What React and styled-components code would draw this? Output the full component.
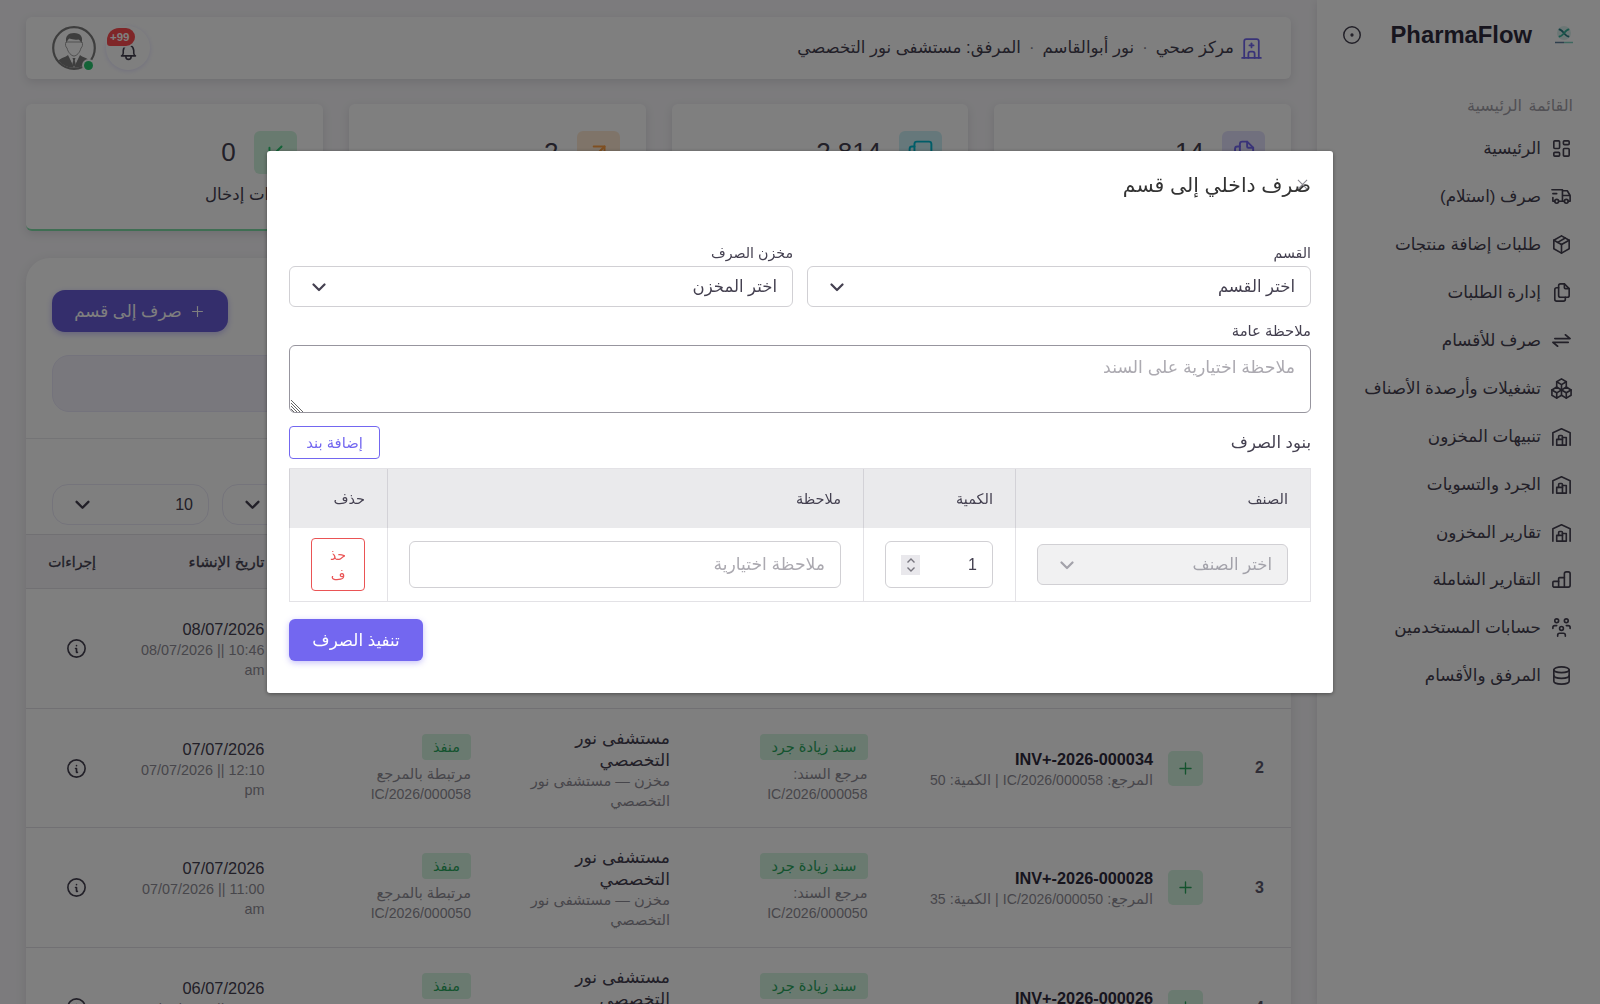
import React from "react";
import styled, { createGlobalStyle } from "styled-components";
import {
  TbLayoutDashboard,
  TbTruckDelivery,
  TbPackage,
  TbPackages,
  TbFiles,
  TbBuildingWarehouse,
  TbUsersGroup,
  TbDatabase,
  TbBuildingHospital,
  TbCircleDot,
  TbInfoCircle,
  TbBell,
  TbBoxMultiple,
  TbArrowUpRight,
  TbArrowDownLeft,
  TbPlus,
} from "react-icons/tb";

const SwapIcon = () => (
  <svg width="22" height="22" viewBox="0 0 24 24" fill="none" stroke="currentColor" strokeWidth="1.7" strokeLinecap="round" strokeLinejoin="round">
    <path d="M5 10h16l-5 -4" />
    <path d="M19 14h-16l5 4" />
  </svg>
);

const BarsIcon = () => (
  <svg width="22" height="22" viewBox="0 0 24 24" fill="none" stroke="currentColor" strokeWidth="1.7" strokeLinecap="round" strokeLinejoin="round">
    <path d="M9 20v-9a1 1 0 0 1 1 -1h5" />
    <path d="M15 20v-14a2 2 0 0 1 2 -2h2a2 2 0 0 1 2 2v12a2 2 0 0 1 -2 2h-15a2 2 0 0 1 -1 -1v-4a1 1 0 0 1 1 -1h5" />
  </svg>
);

const Chevron = ({ size = 14 }) => (
  <svg width={size} height={size} viewBox="0 0 14 14" fill="none" stroke="currentColor" strokeWidth="2.2" strokeLinecap="round" strokeLinejoin="round">
    <path d="M1.5 4.5l5.5 5.5l5.5 -5.5" />
  </svg>
);

const BrandLogo = () => (
  <svg width="20" height="20" viewBox="0 0 20 20" fill="none">
    <circle cx="10" cy="8" r="7" fill="#d9efec" />
    <path d="M5.5 4.5c3 0 5.500 7 9 7" stroke="#2b7f86" strokeWidth="1.8" strokeLinecap="round" />
    <path d="M14.5 4.5c-3 0 -5.500 7 -9 7" stroke="#35b39a" strokeWidth="1.8" strokeLinecap="round" />
    <path d="M1 17.500h9" stroke="#5c7f9b" strokeWidth="1.500" />
    <path d="M10 17.500h9" stroke="#7fd0c0" strokeWidth="1.500" />
  </svg>
);

const AvatarIcon = () => (
  <svg width="44" height="44" viewBox="0 0 44 44">
    <circle cx="22" cy="22" r="20.8" fill="#fff" stroke="#7d7d7d" strokeWidth="2.2" />
    <path d="M6.500 34.500c3 -3 7 -3 9.500 -5.500l6 12l6 -12c2.500 2.500 6.500 2.500 9.500 5.500a20 20 0 0 1 -31 0z" fill="#7d7d7d" />
    <path d="M17.500 30l4.500 12l4.500 -12z" fill="#fff" />
    <path d="M20.5 32h3l-.7 2.5l1 4l-1.8 2.5l-1.8 -2.5l1 -4z" fill="#7d7d7d" />
    <path d="M14 16c-1 2 -.5 5 1 6c1 4.500 4.500 8 7 8s6 -3.500 7 -8c1.500 -1 2 -4 1 -6z" fill="#fff" stroke="#8a8a8a" strokeWidth="0.800" />
    <path d="M14.500 17c-2 -7 2 -10 7.500 -10c6.500 0 9.500 4 7.500 10c-1 -2 -2 -3 -3 -3.500c-4 .5 -6 0 -9 -1c-1.500 1 -2.500 2.500 -3 4.500z" fill="#7d7d7d" />
  </svg>
);

const NAV = [
  { label: "الرئيسية", icon: <TbLayoutDashboard /> },
  { label: "صرف (استلام)", icon: <TbTruckDelivery /> },
  { label: "طلبات إضافة منتجات", icon: <TbPackage /> },
  { label: "إدارة الطلبات", icon: <TbFiles /> },
  { label: "صرف للأقسام", icon: <SwapIcon /> },
  { label: "تشغيلات وأرصدة الأصناف", icon: <TbPackages /> },
  { label: "تنبيهات المخزون", icon: <TbBuildingWarehouse /> },
  { label: "الجرد والتسويات", icon: <TbBuildingWarehouse /> },
  { label: "تقارير المخزون", icon: <TbBuildingWarehouse /> },
  { label: "التقارير الشاملة", icon: <BarsIcon /> },
  { label: "حسابات المستخدمين", icon: <TbUsersGroup /> },
  { label: "المرفق والأقسام", icon: <TbDatabase /> },
];

const STATS = [
  { value: "14", icon: <TbFiles />, color: "#7367f0", tint: "#e3e0fc" },
  { value: "2,814", icon: <TbBoxMultiple />, color: "#00bad1", tint: "#ccf1f6" },
  { value: "2", icon: <TbArrowUpRight />, color: "#ff9f43", tint: "#ffe9d2" },
  { value: "0", icon: <TbArrowDownLeft />, color: "#28c76f", tint: "#d0f4de", label: "سندات إدخال", line: "#7edda7" },
];

const ROWS = [
  { id: "1", date: "08/07/2026", time: "08/07/2026 || 10:46", half: "am" },
  { id: "2", doc: "INV+-2026-000034", ref: "IC/2026/000058", qty: "50", date: "07/07/2026", time: "07/07/2026 || 12:10", half: "pm" },
  { id: "3", doc: "INV+-2026-000028", ref: "IC/2026/000050", qty: "35", date: "07/07/2026", time: "07/07/2026 || 11:00", half: "am" },
  { id: "4", doc: "INV+-2026-000026", ref: "IC/2026/000048", qty: "20", date: "06/07/2026", time: "06/07/2026 || 10:12", half: "am" },
];

function Sidebar() {
  return (
    <Aside>
      <Brand>
        <BrandLogo />
        <BrandName>PharmaFlow</BrandName>
        <TbCircleDot size={22} strokeWidth={1.6} />
      </Brand>
      <NavTitle>القائمة الرئيسية</NavTitle>
      {NAV.map((item) => (
        <NavItem key={item.label}>
          {item.icon}
          <span>{item.label}</span>
        </NavItem>
      ))}
    </Aside>
  );
}

function TopBar() {
  return (
    <Bar>
      <Facility>
        <TbBuildingHospital size={25} color="#7367f0" strokeWidth={1.7} />
        <span>مركز صحي</span>
        <Dot>·</Dot>
        <span>نور أبوالقاسم</span>
        <Dot>·</Dot>
        <span>المرفق: مستشفى نور التخصصي</span>
      </Facility>
      <BarTools>
        <BellButton>
          <TbBell size={21} strokeWidth={1.8} />
          <Count dir="ltr">+99</Count>
        </BellButton>
        <Avatar>
          <AvatarIcon />
          <Online />
        </Avatar>
      </BarTools>
    </Bar>
  );
}

function Ledger() {
  return (
    <LedgerCard>
      <LedgerHead>
        <DispatchButton>
          <TbPlus size={17} strokeWidth={1.6} />
          صرف إلى قسم
        </DispatchButton>
        <FilterStrip />
      </LedgerHead>
      <LedgerTools>
        <PillSelect>
          <span />
          <Chevron size={15} />
        </PillSelect>
        <PillSelect>
          <span>10</span>
          <Chevron size={15} />
        </PillSelect>
      </LedgerTools>
      <HeadRow>
        <span>تاريخ الإنشاء</span>
        <span>إجراءات</span>
      </HeadRow>
      {ROWS.map((row) => (
        <LedgerRow key={row.id} row={row} />
      ))}
    </LedgerCard>
  );
}

function LedgerRow({ row }) {
  return (
    <Row>
      <RowId>{row.id}</RowId>
      {row.doc && (
        <>
          <PlusBox>
            <TbPlus size={19} strokeWidth={1.7} />
          </PlusBox>
          <Cell>
            <DocName dir="ltr">{row.doc}</DocName>
            <Muted>
              المرجع: <Latin>{row.ref}</Latin> <Latin>|</Latin> الكمية: <Latin>{row.qty}</Latin>
            </Muted>
          </Cell>
          <Cell>
            <Badge>سند زيادة جرد</Badge>
            <Muted>مرجع السند:</Muted>
            <Muted>
              <Latin>{row.ref}</Latin>
            </Muted>
          </Cell>
          <Cell>
            <Place>مستشفى نور</Place>
            <Place>التخصصي</Place>
            <Muted>مخزن — مستشفى نور</Muted>
            <Muted>التخصصي</Muted>
          </Cell>
          <Cell>
            <Badge>منفذ</Badge>
            <Muted>مرتبطة بالمرجع</Muted>
            <Muted>
              <Latin>{row.ref}</Latin>
            </Muted>
          </Cell>
        </>
      )}
      <DateCell>
        <DateText>{row.date}</DateText>
        <TimeText dir="ltr">{row.time}</TimeText>
        <TimeText dir="ltr">{row.half}</TimeText>
      </DateCell>
      <Action>
        <TbInfoCircle size={23} strokeWidth={1.7} />
      </Action>
    </Row>
  );
}

function DispatchModal() {
  return (
    <Modal>
      <ModalTitle>صرف داخلي إلى قسم</ModalTitle>
      <CloseMark viewBox="0 0 12 12">
        <path d="M1 1l10 10M11 1l-10 10" stroke="#8a8890" strokeWidth="1.1" />
      </CloseMark>
      <FieldPair>
        <div>
          <Label>القسم</Label>
          <Select>
            <span>اختر القسم</span>
            <Chevron />
          </Select>
        </div>
        <div>
          <Label>مخزن الصرف</Label>
          <Select>
            <span>اختر المخزن</span>
            <Chevron />
          </Select>
        </div>
      </FieldPair>
      <NoteLabel>ملاحظة عامة</NoteLabel>
      <NoteArea>
        ملاحظة اختيارية على السند
        <Grip viewBox="0 0 12 12">
          <path d="M0 0l12 12M0 3l9 9M0 6l6 6M0 9l3 3" stroke="#666" strokeWidth="1" />
        </Grip>
      </NoteArea>
      <ItemsHead>
        <span>بنود الصرف</span>
        <AddButton>إضافة بند</AddButton>
      </ItemsHead>
      <ItemsTable>
        <ItemTh>الصنف</ItemTh>
        <ItemTh>الكمية</ItemTh>
        <ItemTh>ملاحظة</ItemTh>
        <ItemTh>حذف</ItemTh>
        <ItemTd>
          <Select $disabled>
            <span>اختر الصنف</span>
            <Chevron />
          </Select>
        </ItemTd>
        <ItemTd>
          <Input>
            <Quantity>1</Quantity>
            <Spinner>
              <svg width="10" height="16" viewBox="0 0 10 16" fill="none" stroke="#77757e" strokeWidth="1.4">
                <path d="M1.5 5.5l3.5 -3.5l3.5 3.5M1.5 10.5l3.5 3.5l3.5 -3.5" />
              </svg>
            </Spinner>
          </Input>
        </ItemTd>
        <ItemTd>
          <Input>
            <Hint>ملاحظة اختيارية</Hint>
          </Input>
        </ItemTd>
        <ItemTd>
          <DeleteButton>
            <span>حذ</span>
            <span>ف</span>
          </DeleteButton>
        </ItemTd>
      </ItemsTable>
      <SubmitButton>تنفيذ الصرف</SubmitButton>
    </Modal>
  );
}

function App() {
  return (
    <Page dir="rtl">
      <GlobalStyle />
      <Sidebar />
      <Main>
        <TopBar />
        <Stats>
          {STATS.map((stat) => (
            <StatCard key={stat.value} $line={stat.line}>
              <StatTop>
                <StatIcon $color={stat.color} $tint={stat.tint}>
                  {stat.icon}
                </StatIcon>
                <StatValue>{stat.value}</StatValue>
              </StatTop>
              <StatLabel>{stat.label}</StatLabel>
            </StatCard>
          ))}
        </Stats>
        <Ledger />
      </Main>
      <Backdrop>
        <DispatchModal />
      </Backdrop>
    </Page>
  );
}

const GlobalStyle = createGlobalStyle`
  * {
    box-sizing: border-box;
  }
  body {
    margin: 0;
    overflow: hidden;
    font-family: "Liberation Sans", "DejaVu Sans", sans-serif;
    font-size: 16.5px;
    color: #444050;
  }
`;

const Page = styled.div`
  display: flex;
  height: 1004px;
  overflow: hidden;
  background: #f8f7fa;
`;

const Aside = styled.aside`
  width: 283px;
  flex: none;
  background: #fff;
  box-shadow: 0 2px 8px rgba(47, 43, 61, 0.12);
`;

const Brand = styled.div`
  display: flex;
  align-items: center;
  height: 70px;
  padding: 0 26px 0 24px;

  > :last-child {
    margin-inline-start: auto;
  }
`;

const BrandName = styled.span`
  margin-inline-start: 22px;
  font-size: 23.8px;
  font-weight: 700;
  color: #2f2b3d;
`;

const NavTitle = styled.div`
  display: flex;
  align-items: center;
  height: 31px;
  margin: 20px 27px 4px;
  font-size: 16px;
  word-spacing: 2px;
  color: #a3a1a9;
`;

const NavItem = styled.div`
  display: flex;
  align-items: center;
  gap: 9px;
  height: 47.9px;
  padding-inline-start: 27px;
  font-size: 16.8px;
  white-space: nowrap;

  svg {
    width: 23px;
    height: 23px;
    stroke-width: 1.7;
  }
`;

const Main = styled.main`
  display: flex;
  flex-direction: column;
  flex: 1;
  padding: 17px 26px 0;
`;

const Bar = styled.header`
  display: flex;
  align-items: center;
  justify-content: space-between;
  flex: none;
  height: 62px;
  padding: 0 27px 0 26px;
  background: #fff;
  border-radius: 6px;
  box-shadow: 0 3px 10px rgba(47, 43, 61, 0.13);
`;

const Facility = styled.div`
  display: flex;
  align-items: center;
  gap: 8px;
  font-size: 16.6px;

  svg {
    margin-inline-end: -3px;
  }
`;

const Dot = styled.span`
  color: #8a8890;
`;

const BarTools = styled.div`
  display: flex;
  align-items: center;
  gap: 10px;
`;

const BellButton = styled.div`
  position: relative;
  display: flex;
  align-items: center;
  justify-content: center;
  width: 44px;
  height: 44px;
  padding-top: 6px;
  border-radius: 50%;
  box-shadow: 0 1px 5px rgba(115, 103, 240, 0.2);
`;

const Count = styled.span`
  position: absolute;
  top: 2px;
  left: 1px;
  padding: 0 5px 0 3px;
  height: 18px;
  line-height: 18px;
  border-radius: 12px 9px 9px 3px;
  background: #ff4c51;
  box-shadow: 0 0 0 1.5px #fff;
  color: #fff;
  font-size: 11.5px;
  font-weight: 700;
`;

const Avatar = styled.div`
  position: relative;
  width: 44px;
  height: 44px;
`;

const Online = styled.span`
  position: absolute;
  right: 3px;
  bottom: 0;
  width: 9px;
  height: 9px;
  border-radius: 50%;
  background: #28c76f;
  box-shadow: 0 0 0 2px #fff;
`;

const Stats = styled.section`
  display: grid;
  grid-template-columns: repeat(4, 1fr);
  gap: 26px;
  flex: none;
  margin-top: 25px;
`;

const StatCard = styled.div`
  height: 127px;
  padding: 27px 26px 0;
  background: #fff;
  border-radius: 6px;
  border-bottom: 2px solid ${(props) => props.$line || "transparent"};
  box-shadow: 0 3px 10px rgba(47, 43, 61, 0.13);
`;

const StatTop = styled.div`
  display: flex;
  align-items: center;
  gap: 18px;
`;

const StatIcon = styled.div`
  display: flex;
  align-items: center;
  justify-content: center;
  width: 43px;
  height: 43px;
  border-radius: 6px;
  color: ${(props) => props.$color};
  background: ${(props) => props.$tint};
  font-size: 29px;

  svg {
    stroke-width: 1.6;
  }
`;

const StatValue = styled.span`
  font-size: 26px;
`;

const StatLabel = styled.div`
  margin-top: 11px;
  font-size: 16.6px;
`;

const LedgerCard = styled.section`
  flex: none;
  margin-top: 27px;
  background: #fff;
  border-radius: 24px 24px 0 0;
  box-shadow: 0 3px 12px rgba(47, 43, 61, 0.12);
`;

const LedgerHead = styled.div`
  display: flex;
  flex-direction: column;
  align-items: flex-end;
  height: 181px;
  padding: 32px 26px 0;
  border-bottom: 1px solid #e9e8ec;
`;

const DispatchButton = styled.button`
  display: flex;
  align-items: center;
  justify-content: center;
  gap: 7px;
  width: 176px;
  height: 42px;
  border: 0;
  border-radius: 13px;
  background: #685dd8;
  box-shadow: 0 2px 6px rgba(115, 103, 240, 0.4);
  color: #fff;
  font-family: inherit;
  font-size: 16.7px;
`;

const FilterStrip = styled.div`
  width: 100%;
  height: 57px;
  margin-top: 23px;
  border: 1px solid #e9e7f8;
  border-radius: 17px;
  background: #f3f1fb;
`;

const LedgerTools = styled.div`
  display: flex;
  align-items: flex-end;
  justify-content: flex-end;
  gap: 13px;
  height: 95px;
  padding: 0 26px 9px;
`;

const PillSelect = styled.div`
  display: flex;
  align-items: center;
  justify-content: space-between;
  width: 157px;
  height: 41px;
  padding: 0 15px 0 22px;
  border: 1px solid #eae8f6;
  border-radius: 16px;
  font-size: 16px;
`;

const HeadRow = styled.div`
  display: grid;
  grid-template-columns: 61px 50px 285.5px 197.5px 199px 206.5px 168.5px 44px;
  align-items: center;
  height: 55px;
  padding-inline-start: 27px;
  border-top: 1px solid #e2e1e6;
  border-bottom: 1px solid #e2e1e6;
  background: #f6f5f8;
  font-size: 14px;
  -webkit-text-stroke: 0.3px currentColor;
  white-space: nowrap;

  > :first-child {
    grid-column: 7;
    font-size: 15px;
  }
`;

const Row = styled.div`
  display: grid;
  grid-template-columns: 61px 50px 285.5px 197.5px 199px 206.5px 168.5px 44px;
  align-items: center;
  height: 119.6px;
  padding-inline-start: 27px;
  border-bottom: 1px solid #e2e1e6;
`;

const RowId = styled.span`
  padding-top: 1px;
  font-size: 16px;
  font-weight: 700;
  color: #5d596c;
`;

const PlusBox = styled.div`
  display: flex;
  align-items: center;
  justify-content: center;
  width: 35px;
  height: 35px;
  margin-top: 1px;
  border-radius: 5px;
  background: #d4f4e0;
  color: #28a65c;
`;

const Cell = styled.div`
  display: flex;
  flex-direction: column;
  align-items: flex-start;
  padding-top: 2px;
  white-space: nowrap;
`;

const DateCell = styled(Cell)`
  grid-column: 7;
`;

const DocName = styled.div`
  font-size: 16.3px;
  line-height: 22px;
  font-weight: 700;
  color: #2f2b3d;
`;

const Muted = styled.div`
  font-size: 14.6px;
  line-height: 20px;
  color: #8f8d96;
`;

const Latin = styled.span`
  font-size: 14.1px;
`;

const Place = styled.div`
  font-size: 17.2px;
  line-height: 22px;
`;

const Badge = styled.span`
  height: 26px;
  margin-bottom: 4px;
  padding: 0 11px;
  border-radius: 4px;
  background: #d4f4e0;
  color: #28a65c;
  font-size: 14.5px;
  line-height: 26px;
`;

const DateText = styled.div`
  font-size: 16.4px;
  line-height: 22px;
`;

const TimeText = styled.div`
  font-size: 14.4px;
  line-height: 20px;
  color: #8f8d96;
`;

const Action = styled.div`
  display: flex;
  justify-content: center;
  padding-top: 1px;
  padding-inline-end: 4px;
`;

const Backdrop = styled.div`
  position: fixed;
  inset: 0;
  padding-top: 151px;
  background: rgba(0, 0, 0, 0.5);
`;

const Modal = styled.div`
  position: relative;
  width: 1066px;
  height: 542px;
  margin: 0 auto;
  padding: 19px 22px 0;
  background: #fff;
  border-radius: 3px;
  box-shadow: 0 1px 4px rgba(0, 0, 0, 0.4);
`;

const ModalTitle = styled.div`
  height: 30px;
  line-height: 31px;
  font-size: 20.4px;
  color: #333;
`;

const CloseMark = styled.svg`
  position: absolute;
  top: 28px;
  right: 25px;
  width: 11px;
  height: 11px;
`;

const FieldPair = styled.div`
  display: grid;
  grid-template-columns: 1fr 1fr;
  gap: 14px;
  margin-top: 42px;
`;

const Label = styled.div`
  height: 24px;
  line-height: 22px;
  font-size: 14.2px;
`;

const Select = styled.div`
  display: flex;
  align-items: center;
  justify-content: space-between;
  width: 100%;
  height: 41px;
  padding: 0 15px 0 22px;
  border: 1px solid #d1d0d4;
  border-radius: 6px;
  background: ${(props) => (props.$disabled ? "#f1f1f2" : "#fff")};
  color: ${(props) => (props.$disabled ? "#a3a2aa" : "#444050")};
  font-size: 16.5px;
`;

const NoteLabel = styled(Label)`
  height: 25px;
  line-height: 23px;
  margin-top: 13px;
  font-size: 14.8px;
`;

const NoteArea = styled.div`
  position: relative;
  height: 68px;
  padding: 9px 15px;
  border: 1px solid #97959e;
  border-radius: 6px;
  color: #acaab1;
  font-size: 17.3px;
  line-height: 24px;
`;

const Grip = styled.svg`
  position: absolute;
  left: 1px;
  bottom: 0;
  width: 12px;
  height: 12px;
`;

const ItemsHead = styled.div`
  display: flex;
  align-items: center;
  justify-content: space-between;
  margin: 13px 0 9px;
`;

const AddButton = styled.button`
  width: 91px;
  height: 33px;
  border: 1px solid #7367f0;
  border-radius: 4px;
  background: #fff;
  color: #7367f0;
  font-family: inherit;
  font-size: 14.8px;
`;

const ItemsTable = styled.div`
  display: grid;
  grid-template-columns: 295px 152px 1fr 98px;
  grid-template-rows: 59px 73px;
  border: 1px solid #e3e2e6;
  border-left: 0;
`;

const ItemTh = styled.div`
  display: flex;
  align-items: center;
  padding: 0 22px 0 21px;
  border-left: 1px solid #d3d2d7;
  background: #eaeaec;
  font-size: 14.5px;
`;

const ItemTd = styled.div`
  display: flex;
  align-items: center;
  padding: 0 22px 0 21px;
  border-left: 1px solid #e3e2e6;
`;

const Input = styled.div`
  display: flex;
  align-items: center;
  justify-content: space-between;
  width: 100%;
  height: 47px;
  padding: 0 15px;
  border: 1px solid #d1d0d4;
  border-radius: 6px;
`;

const Quantity = styled.span`
  font-size: 16px;
`;

const Hint = styled.span`
  font-size: 17.2px;
  color: #acaab1;
`;

const Spinner = styled.span`
  display: flex;
  align-items: center;
  justify-content: center;
  width: 19px;
  height: 20px;
  background: #e9e8ec;
`;

const DeleteButton = styled.button`
  display: flex;
  flex-direction: column;
  align-items: center;
  justify-content: center;
  width: 54px;
  height: 53px;
  border: 1px solid #ea5455;
  border-radius: 4px;
  background: #fff;
  color: #ea5455;
  font-family: inherit;
  font-size: 14.2px;
  line-height: 20px;
`;

const SubmitButton = styled.button`
  display: block;
  width: 134px;
  height: 42px;
  margin: 17px auto 0 0;
  border: 0;
  border-radius: 6px;
  background: #7367f0;
  box-shadow: 0 2px 6px rgba(115, 103, 240, 0.4);
  color: #fff;
  font-family: inherit;
  font-size: 16.7px;
`;

export default App;
